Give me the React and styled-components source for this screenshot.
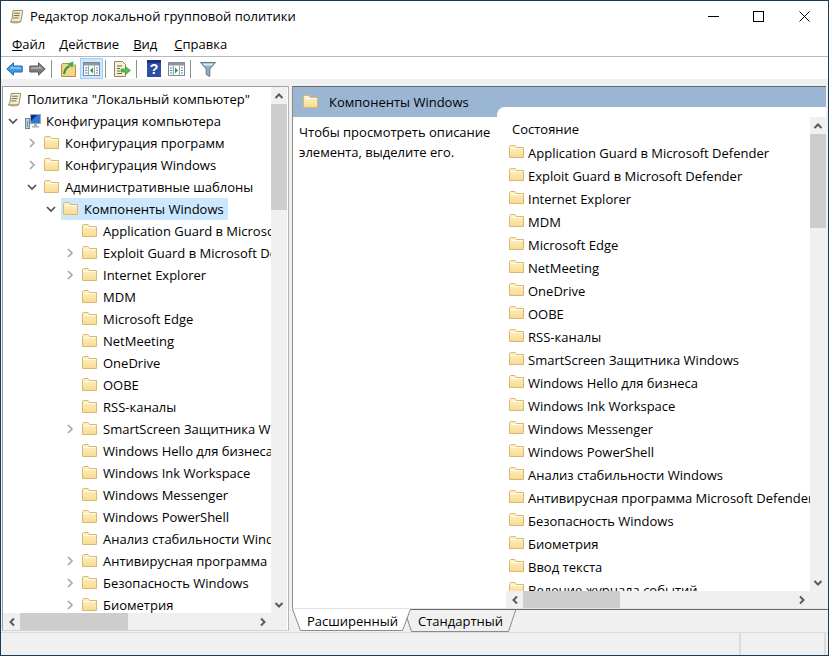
import React, { useId } from "react";
import styled, { createGlobalStyle } from "styled-components";

const listItems = [
  "Application Guard в Microsoft Defender",
  "Exploit Guard в Microsoft Defender",
  "Internet Explorer",
  "MDM",
  "Microsoft Edge",
  "NetMeeting",
  "OneDrive",
  "OOBE",
  "RSS-каналы",
  "SmartScreen Защитника Windows",
  "Windows Hello для бизнеса",
  "Windows Ink Workspace",
  "Windows Messenger",
  "Windows PowerShell",
  "Анализ стабильности Windows",
  "Антивирусная программа Microsoft Defender",
  "Безопасность Windows",
  "Биометрия",
  "Ввод текста",
  "Ведение журнала событий",
];

const expandable = [
  "Exploit Guard в Microsoft Defender",
  "Internet Explorer",
  "SmartScreen Защитника Windows",
  "Антивирусная программа Microsoft Defender",
  "Безопасность Windows",
  "Биометрия",
];

export default function App() {
  return (
    <>
      <GlobalStyle />
      <Window>
        <TitleBar>
          <ScrollIcon />
          <Title>Редактор локальной групповой политики</Title>
          <WindowButtons>
            <WindowButton>
              <svg width="11" height="11" viewBox="0 0 11 11">
                <path d="M0 5.5h11" stroke="#000" />
              </svg>
            </WindowButton>
            <WindowButton>
              <svg width="11" height="11" viewBox="0 0 11 11">
                <rect x="0.5" y="0.5" width="10" height="10" fill="none" stroke="#000" />
              </svg>
            </WindowButton>
            <WindowButton>
              <svg width="11" height="11" viewBox="0 0 11 11">
                <path d="M0.5 0.5l10 10M10.5 0.5l-10 10" stroke="#000" />
              </svg>
            </WindowButton>
          </WindowButtons>
        </TitleBar>

        <MenuBar>
          <MenuItem><u>Ф</u>айл</MenuItem>
          <MenuItem><u>Д</u>ействие</MenuItem>
          <MenuItem><u>В</u>ид</MenuItem>
          <MenuItem><u>С</u>правка</MenuItem>
        </MenuBar>

        <Toolbar>
          <ToolButton><ArrowIcon color="#3f9ae6" edge="#1c6db5" /></ToolButton>
          <ToolButton><ArrowIcon color="#7d7d7d" edge="#5c5c5c" flip /></ToolButton>
          <ToolSep />
          <ToolButton><UpFolderIcon /></ToolButton>
          <ToolButton $active><PaneIcon /></ToolButton>
          <ToolSep />
          <ToolButton><ExportIcon /></ToolButton>
          <ToolSep />
          <ToolButton><HelpIcon /></ToolButton>
          <ToolButton><PaneIcon right /></ToolButton>
          <ToolSep />
          <ToolButton><FilterIcon /></ToolButton>
        </Toolbar>
        <ToolStrip />

        <Main>
          <TreePane>
            <Tree>
              <RootRow>
                <ScrollIcon />
                <span>Политика "Локальный компьютер"</span>
              </RootRow>
              <TreeRow $level={1}>
                <Chevron open />
                <TreeItem $gap={5}>
                  <ComputerIcon />
                  Конфигурация компьютера
                </TreeItem>
              </TreeRow>
              <FolderRow level={2} chevron="closed" text="Конфигурация программ" />
              <FolderRow level={2} chevron="closed" text="Конфигурация Windows" />
              <FolderRow level={2} chevron="open" text="Административные шаблоны" />
              <FolderRow level={3} chevron="open" text="Компоненты Windows" selected />
              {listItems.slice(0, 18).map((item) => (
                <FolderRow
                  key={item}
                  level={4}
                  chevron={expandable.includes(item) ? "closed" : null}
                  text={item}
                />
              ))}
            </Tree>
            <VScroll thumbSize={106} />
            <HScroll thumbSize={108} />
            <Corner />
          </TreePane>

          <RightColumn>
            <DetailPane>
              <DetailHeader>
                <FolderIcon />
                <span>Компоненты Windows</span>
              </DetailHeader>
              <DetailBody>
                <Description>
                  Чтобы просмотреть описание элемента, выделите его.
                </Description>
                <ListPanel>
                  <List>
                    <ListHead>Состояние</ListHead>
                    {listItems.map((item) => (
                      <ListRow key={item}>
                        <FolderIcon />
                        <span>{item}</span>
                      </ListRow>
                    ))}
                  </List>
                  <ListVScroll thumbSize={94} />
                  <ListHScroll thumbSize={97} />
                  <Corner />
                </ListPanel>
              </DetailBody>
            </DetailPane>
            <TabStrip>
              <Tab $active $width={113}>
                <TabShape viewBox="0 0 113 22">
                  <path d="M0.5 0L8.5 21.5H110.5L118.5 0Z" fill="#fff" />
                  <path d="M0.5 0L8.5 21.5H110.5L118.5 0" fill="none" stroke="#8a8a8a" />
                </TabShape>
                <TabLabel $left={15} $top={2}>Расширенный</TabLabel>
              </Tab>
              <Tab $width={110}>
                <TabShape viewBox="0 0 110 22">
                  <path d="M2 8L6.5 21.5H103.5L111 -1" fill="none" stroke="#8a8a8a" />
                </TabShape>
                <TabLabel $left={13} $top={1}>Стандартный</TabLabel>
              </Tab>
            </TabStrip>
          </RightColumn>
        </Main>

        <StatusBar>
          <StatusCell $width={740} />
          <StatusCell $width={85} />
        </StatusBar>
      </Window>
    </>
  );
}

function FolderRow({ level, chevron, text, selected }) {
  return (
    <TreeRow $level={level}>
      {chevron ? <Chevron open={chevron === "open"} /> : <ChevronSlot />}
      <TreeItem $selected={selected} $gap={6}>
        <FolderIcon />
        {text}
      </TreeItem>
    </TreeRow>
  );
}

function Chevron({ open }) {
  return (
    <ChevronSlot>
      <svg width="10" height="10" viewBox="0 0 10 10">
        {open ? (
          <path d="M1 3l4 4 4-4" fill="none" stroke="#505050" strokeWidth="1.7" />
        ) : (
          <path d="M3 1l4 4-4 4" fill="none" stroke="#a8a8a8" strokeWidth="1.7" />
        )}
      </svg>
    </ChevronSlot>
  );
}

function ScrollArrow({ dir, wide }) {
  const paths = {
    up: "M1.5 7l3.5-3.5L8.5 7",
    down: "M1.5 3L5 6.5 8.5 3",
    left: "M7 1.5L3.5 5 7 8.5",
    right: "M3 1.5L6.5 5 3 8.5",
  };
  return (
    <ArrowBox $wide={wide}>
      <svg width="10" height="10" viewBox="0 0 10 10">
        <path d={paths[dir]} fill="none" stroke="#5a5a5a" strokeWidth="2" />
      </svg>
    </ArrowBox>
  );
}

function VScrollBase({ className, thumbSize }) {
  return (
    <div className={className}>
      <ScrollArrow dir="up" />
      <ScrollTrack>
        <VThumb style={{ height: thumbSize }} />
      </ScrollTrack>
      <ScrollArrow dir="down" />
    </div>
  );
}

function HScrollBase({ className, thumbSize }) {
  return (
    <div className={className}>
      <ScrollArrow dir="left" wide />
      <ScrollTrack $row>
        <HThumb style={{ width: thumbSize }} />
      </ScrollTrack>
      <ScrollArrow dir="right" wide />
    </div>
  );
}

function FolderIcon() {
  const id = useId();
  return (
    <FolderSvg width="15" height="13" viewBox="0 0 15 13">
      <defs>
        <linearGradient id={id} x1="0" y1="0" x2="0" y2="1">
          <stop offset="0" stopColor="#fff3c8" />
          <stop offset="1" stopColor="#f6da90" />
        </linearGradient>
      </defs>
      <path d="M0.5 1.5V12.5H14.5V2.5H7.5L6 0.5H1.5Z" fill={`url(#${id})`} stroke="#d9b870" />
      <path d="M1.5 3.5H13.5" stroke="#fffbe8" />
    </FolderSvg>
  );
}

function ScrollIcon() {
  return (
    <IconSvg width="15" height="15" viewBox="0 0 16 16">
      <path d="M4.5 1.5H14.5V3L12.5 13.5H1.5L3 11.5Z" fill="#f5eccb" stroke="#8f8468" />
      <path d="M1.5 13.5C3 15.5 11 15 12.5 13.5" fill="#e9dcae" stroke="#8f8468" />
      <path d="M5.5 4.5H11.5M5 7H11M4.5 9.5H10" stroke="#6d6552" />
    </IconSvg>
  );
}

function ComputerIcon() {
  return (
    <IconSvg width="16" height="16" viewBox="0 0 16 16">
      <rect x="0.5" y="5.5" width="4" height="10" fill="#c3cbd4" stroke="#77838f" />
      <rect x="5.5" y="1.5" width="10" height="9" fill="#2f78d6" stroke="#a0aab5" />
      <path d="M6 2h6l-6 6z" fill="#0b2f7d" />
      <path d="M9 11h3v2h2v1.5H7V13h2z" fill="#a5b0bb" />
      <path d="M2.5 8v6" stroke="#2fa8d8" />
    </IconSvg>
  );
}

function ArrowIcon({ color, edge, flip }) {
  return (
    <IconSvg width="17" height="14" viewBox="0 0 17 14" style={flip ? { transform: "scaleX(-1)" } : undefined}>
      <path d="M0.8 7L7.5 0.8V4H16.2V10H7.5V13.2Z" fill={color} stroke={edge} />
      <path d="M3 7L7 3.5V5H15V7H3Z" fill="#fff" opacity="0.35" />
    </IconSvg>
  );
}

function UpFolderIcon() {
  return (
    <IconSvg width="15" height="16" viewBox="0 0 15 16">
      <path d="M0.5 4V15.5H14.5V4H8L7 2.5H1.5Z" fill="#f4d68a" stroke="#b58f44" />
      <path d="M3 13C3.5 9 5.5 6.5 8.5 5" fill="none" stroke="#2f9a37" strokeWidth="2.2" />
      <path d="M6.5 2.5L12.5 0.5 11.5 7Z" fill="#3fae45" />
    </IconSvg>
  );
}

function PaneIcon({ right }) {
  return (
    <IconSvg width="17" height="14" viewBox="0 0 17 14">
      <rect x="0.5" y="0.5" width="16" height="13" fill="#fff" stroke="#7f8a94" />
      <rect x="1" y="1" width="15" height="2.5" fill="#8d98a3" />
      <path d="M5.5 3.5V13.5M11.5 3.5V13.5" stroke="#9aa4ad" />
      <path d="M2 6H4.5M2 8.5H4.5M2 11H4.5M13 6H15M13 8.5H15M13 11H15" stroke="#5f86b8" />
      <path d={right ? "M7 5.5V11.5L10 8.5Z" : "M10 5.5V11.5L7 8.5Z"} fill="#1f9a3d" />
    </IconSvg>
  );
}

function ExportIcon() {
  return (
    <IconSvg width="17" height="16" viewBox="0 0 17 16">
      <path d="M0.5 0.5H8.5L11.5 3.5V15.5H0.5Z" fill="#f7f0d4" stroke="#8f8468" />
      <path d="M3 5H8M3 7.5H6M3 10H6M3 12.5H8" stroke="#6d6552" />
      <path d="M7 8H11.5V5.5L16.5 9.5L11.5 13.5V11H7Z" fill="#5cbf45" stroke="#2f8f2f" strokeWidth="0.6" />
    </IconSvg>
  );
}

function HelpIcon() {
  return (
    <IconSvg width="14" height="17" viewBox="0 0 14 17">
      <rect width="14" height="17" fill="#2c4fa6" />
      <rect x="0" y="0" width="14" height="3" fill="#1a2f7a" />
      <text x="7" y="14" textAnchor="middle" fontFamily="Liberation Sans, sans-serif" fontWeight="700" fontSize="14" fill="#fff">?</text>
    </IconSvg>
  );
}

function FilterIcon() {
  return (
    <IconSvg width="16" height="16" viewBox="0 0 16 16">
      <path d="M0.5 1.5H15.5L9.8 8V15.5L6.2 13.5V8Z" fill="#93adbf" stroke="#5f7a8c" />
      <path d="M2.5 2.5H13.5L11.5 4.5H4.5Z" fill="#dde8ee" />
    </IconSvg>
  );
}

const GlobalStyle = createGlobalStyle`
  html, body {
    margin: 0;
    padding: 0;
    background: #fff;
  }
  body {
    font-family: "Open Sans", "Noto Sans", sans-serif;
    font-size: 13px;
    color: #000;
  }
`;

const Window = styled.div`
  width: 829px;
  height: 656px;
  box-sizing: border-box;
  border: 1px solid #1b3a55;
  display: flex;
  flex-direction: column;
  overflow: hidden;
  background: #f0f0f0;
`;

const IconSvg = styled.svg`
  flex: none;
  display: block;
`;

const FolderSvg = styled(IconSvg)`
  margin-bottom: 2px;
`;

const TitleBar = styled.div`
  height: 30px;
  flex: none;
  display: flex;
  align-items: center;
  padding-left: 8px;
  background: #fff;
`;

const Title = styled.div`
  margin-left: 6px;
  flex: 1;
`;

const WindowButtons = styled.div`
  display: flex;
  height: 100%;
  margin-right: 1px;
`;

const WindowButton = styled.div`
  width: 45.5px;
  display: flex;
  align-items: center;
  justify-content: center;
`;

const MenuBar = styled.div`
  height: 25px;
  flex: none;
  display: flex;
  align-items: center;
  gap: 14px;
  padding-left: 11px;
  background: #fff;
  border-bottom: 1px solid #b9b9b9;
`;

const MenuItem = styled.div`
  line-height: 20px;
  &:last-child {
    margin-left: 3px;
  }
`;

const Toolbar = styled.div`
  height: 22px;
  flex: none;
  box-sizing: border-box;
  display: flex;
  align-items: center;
  padding: 1px 0 0 2px;
  background: #fff;
`;

const ToolButton = styled.div`
  width: 23px;
  height: 21px;
  box-sizing: border-box;
  display: flex;
  align-items: center;
  justify-content: center;
  background: ${(p) => (p.$active ? "#cce8ff" : "transparent")};
  border: 1px solid ${(p) => (p.$active ? "#99d1ff" : "transparent")};
`;

const ToolSep = styled.div`
  width: 1px;
  height: 18px;
  margin: 0 5px 0 2px;
  background: #8f8f8f;
`;

const ToolStrip = styled.div`
  height: 7px;
  flex: none;
  background: #f0f0f0;
`;

const Main = styled.div`
  flex: 1;
  min-height: 0;
  display: flex;
`;

const TreePane = styled.div`
  width: 287px;
  flex: none;
  margin-left: 1px;
  margin-bottom: 1px;
  box-sizing: border-box;
  display: grid;
  grid-template-columns: 268px 16px;
  grid-template-rows: 526px 17px;
  background: #fff;
  border: 1px solid #a0a0a0;
  border-right-color: #b4b4b4;
  border-bottom-color: #d4d4d4;
`;

const Tree = styled.div`
  overflow: hidden;
  padding-top: 1px;
  white-space: nowrap;
`;

const RootRow = styled.div`
  height: 22px;
  display: flex;
  align-items: center;
  gap: 5px;
  padding-left: 4px;
`;

const TreeRow = styled.div`
  height: 22px;
  display: flex;
  align-items: center;
  padding-left: ${(p) => 5 + (p.$level - 1) * 19}px;
`;

const ChevronSlot = styled.div`
  width: 17px;
  height: 22px;
  flex: none;
  display: flex;
  align-items: center;
`;

const TreeItem = styled.div`
  height: 22px;
  display: flex;
  align-items: center;
  gap: ${(p) => p.$gap}px;
  margin-left: -2px;
  padding: 0 4px 0 2px;
  background: ${(p) => (p.$selected ? "#cce8ff" : "transparent")};
`;

const ArrowBox = styled.div`
  width: ${(p) => (p.$wide ? "17px" : "16px")};
  height: 17px;
  flex: none;
  display: flex;
  align-items: center;
  justify-content: center;
`;

const ScrollTrack = styled.div`
  flex: 1;
  min-width: 0;
  min-height: 0;
  display: flex;
  flex-direction: ${(p) => (p.$row ? "row" : "column")};
`;

const VThumb = styled.div`
  width: 100%;
  background: #cdcdcd;
`;

const HThumb = styled.div`
  height: 100%;
  background: #cdcdcd;
`;

const VScroll = styled(VScrollBase)`
  display: flex;
  flex-direction: column;
  min-height: 0;
  background: #f0f0f0;
`;

const HScroll = styled(HScrollBase)`
  display: flex;
  min-width: 0;
  background: #f0f0f0;
`;

const Corner = styled.div`
  background: #f0f0f0;
`;

const RightColumn = styled.div`
  flex: 1;
  min-width: 0;
  margin-left: 3px;
  display: flex;
  flex-direction: column;
`;

const DetailPane = styled.div`
  flex: 1;
  min-height: 0;
  margin-right: 2px;
  display: flex;
  flex-direction: column;
  background: #fff;
  border-top: 1px solid #696969;
  border-left: 1px solid #8c8c8c;
  border-bottom: 1px solid #e3e3e3;
`;

const DetailHeader = styled.div`
  height: 30px;
  flex: none;
  box-sizing: border-box;
  display: flex;
  align-items: center;
  gap: 11px;
  padding-left: 10px;
  background: #9bb6d3;
`;

const DetailBody = styled.div`
  flex: 1;
  min-height: 0;
  display: flex;
`;

const Description = styled.div`
  width: 204px;
  flex: none;
  box-sizing: border-box;
  padding: 5px 0 0 6px;
  line-height: 20px;
`;

const ListPanel = styled.div`
  flex: 1;
  min-width: 0;
  margin-top: -10px;
  display: grid;
  grid-template-columns: 313px 16px;
  grid-template-rows: 484px 17px;
  background: #fff;
  border-top-left-radius: 8px;
`;

const List = styled.div`
  overflow: hidden;
  padding-top: 11px;
  white-space: nowrap;
`;

const ListHead = styled.div`
  height: 23px;
  box-sizing: border-box;
  display: flex;
  align-items: center;
  padding: 0 0 2px 15px;
`;

const ListRow = styled.div`
  height: 23px;
  display: flex;
  align-items: center;
  gap: 4px;
  padding-left: 12px;
`;

const ListVScroll = styled(VScroll)`
  margin-top: 10px;
`;

const ListHScroll = styled(HScroll)`
  margin-left: 9px;
`;

const TabStrip = styled.div`
  height: 23px;
  flex: none;
  box-sizing: border-box;
  display: flex;
  border-top: 1px solid #696969;
`;

const Tab = styled.div`
  position: relative;
  width: ${(p) => p.$width}px;
  height: 22px;
  flex: none;
  margin-top: ${(p) => (p.$active ? "-1px" : "0")};
`;

const TabShape = styled.svg`
  position: absolute;
  inset: 0;
  width: 100%;
  height: 100%;
  overflow: visible;
`;

const TabLabel = styled.span`
  position: absolute;
  left: ${(p) => p.$left}px;
  top: ${(p) => p.$top}px;
  line-height: 20px;
`;

const StatusBar = styled.div`
  height: 23px;
  flex: none;
  display: flex;
  box-sizing: border-box;
  border-top: 1px solid #dcdcdc;
`;

const StatusCell = styled.div`
  width: ${(p) => p.$width}px;
  flex: none;
  border-right: 2px solid #dcdcdc;
  box-sizing: border-box;
`;
